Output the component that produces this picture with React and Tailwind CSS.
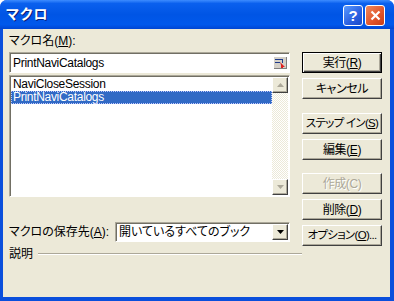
import React from 'react';

const raised =
  'border border-t-white border-l-white border-r-[#404040] border-b-[#404040] shadow-[inset_-1px_-1px_#aca899]';
const sunken =
  'border border-t-[#aca899] border-l-[#aca899] border-r-white border-b-white shadow-[inset_1px_1px_#716f64]';

function Btn({ children, isDefault, disabled, tight, className = '' }) {
  const frame = isDefault
    ? 'border border-black shadow-[inset_1px_1px_#fff,inset_-1px_-1px_#404040,inset_-2px_-2px_#aca899]'
    : raised;
  return (
    <div
      className={`h-[21px] w-[80px] bg-[#ece9d8] flex items-center justify-center leading-none whitespace-nowrap ${
        tight ? 'text-[11.5px] tracking-[-0.7px]' : 'text-[12px] tracking-[-0.4px]'
      } ${frame} ${disabled ? 'text-[#aca899] [text-shadow:1px_1px_#fff]' : 'text-black'} ${className}`}
    >
      {children}
    </div>
  );
}

function Arrow({ dir = 'down', color = '#000' }) {
  return (
    <svg width="7" height="4" viewBox="0 0 7 4">
      {dir === 'down' ? (
        <polygon points="0,0 7,0 3.5,4" fill={color} />
      ) : (
        <polygon points="0,4 7,4 3.5,0" fill={color} />
      )}
    </svg>
  );
}

function RefIcon() {
  return (
    <svg width="13" height="12" viewBox="0 0 13 12">
      <rect x="0" y="0" width="13" height="12" fill="#d4d0c8" />
      <rect x="1" y="2" width="7" height="1" fill="#1f3b8a" />
      <rect x="1" y="5" width="5" height="1" fill="#1f3b8a" />
      <rect x="8" y="2" width="1" height="4" fill="#1f3b8a" />
      <polygon points="6,5 11,10 9,10 9,12 7,12 7,8" fill="#e02020" />
      <rect x="12" y="0" width="1" height="12" fill="#808080" />
      <rect x="0" y="11" width="13" height="1" fill="#808080" />
    </svg>
  );
}

export default function App() {
  return (
    <div className="w-[394px] h-[301px] bg-[#0a4fdc] rounded-t-[7px] flex flex-col overflow-hidden font-['Liberation_Sans','Noto_Sans_CJK_JP',sans-serif] [font-feature-settings:'palt'] select-none">
      {/* title bar */}
      <div className="h-[29px] shrink-0 flex items-center pl-[6px] pr-[9px] bg-[linear-gradient(to_bottom,#3d8cff_0%,#0a60ee_12%,#0055e5_50%,#0058ec_85%,#0045d2_100%)]">
        <span className="text-white font-bold text-[14px] tracking-[1px] [text-shadow:1px_1px_#0a1e7a]">マクロ</span>
        <div className="ml-auto flex gap-[2px] mt-[1px]">
          <div className="w-[20px] h-[21px] rounded-[3px] border border-white bg-[linear-gradient(135deg,#5a9bff,#2a5fe0_60%,#1b49c8)] flex items-center justify-center text-white font-bold text-[15px] leading-none">
            ?
          </div>
          <div className="w-[20px] h-[21px] rounded-[3px] border border-white bg-[linear-gradient(135deg,#f08a5c,#e0532a_60%,#c63d16)] flex items-center justify-center">
            <svg width="11" height="11" viewBox="0 0 11 11">
              <path d="M1.5 1.5 L9.5 9.5 M9.5 1.5 L1.5 9.5" stroke="#fff" strokeWidth="2.2" />
            </svg>
          </div>
        </div>
      </div>

      {/* body */}
      <div className="flex-1 ml-[3px] mr-[4px] mb-[4px] bg-[#ece9d8] flex pl-[6px] pr-[8px] text-[12px] text-black">
        {/* left column */}
        <div className="w-[293px] flex flex-col pt-[5px]">
          <div className="leading-[14px] h-[14px]">
            マクロ名(<span className="underline">M</span>):
          </div>
          <div className={`mt-[4px] w-[281px] h-[21px] bg-white flex items-center pl-[3px] pr-[2px] ${sunken}`}>
            <span className="leading-none tracking-[-0.3px]">PrintNaviCatalogs</span>
            <span className="ml-auto flex">
              <RefIcon />
            </span>
          </div>
          <div className={`mt-[2px] w-[281px] h-[122px] bg-white flex p-[1px] ${sunken}`}>
            <div className="flex-1 flex flex-col pt-[1px] leading-[13px] tracking-[-0.3px]">
              <div className="pl-[2px] h-[13px]">NaviCloseSession</div>
              <div className="pl-[2px] h-[13px] bg-[#316ac5] text-white outline-1 outline-dotted outline-[#c0c8ff] -outline-offset-1">
                PrintNaviCatalogs
              </div>
            </div>
            <div className="w-[16px] flex flex-col bg-[repeating-conic-gradient(#ece9d8_0%_25%,#ffffff_0%_50%)] bg-size-[2px_2px]">
              <div className={`h-[16px] bg-[#ece9d8] flex items-center justify-center ${raised}`}>
                <Arrow dir="up" color="#aca899" />
              </div>
              <div className="flex-1" />
              <div className={`h-[16px] bg-[#ece9d8] flex items-center justify-center ${raised}`}>
                <Arrow dir="down" color="#aca899" />
              </div>
            </div>
          </div>
          <div className="mt-[25px] flex items-center w-[281px]">
            <span className="w-[106px] leading-none">
              マクロの保存先(<span className="underline">A</span>):
            </span>
            <div className={`flex-1 h-[20px] bg-white flex items-center pl-[3px] p-[1px] ${sunken}`}>
              <span className="leading-none">開いているすべてのブック</span>
              <div className={`ml-auto w-[16px] h-full bg-[#ece9d8] flex items-center justify-center ${raised}`}>
                <Arrow dir="down" />
              </div>
            </div>
          </div>
          <div className="mt-[5px] h-[14px] flex items-center">
            <span className="leading-none">説明</span>
            <div className="flex-1 ml-[5px] border-t border-t-[#aca899] border-b border-b-white" />
          </div>
        </div>

        {/* right column */}
        <div className="w-[80px] flex flex-col pt-[23px]">
          <Btn isDefault>
            実行(<span className="underline">R</span>)
          </Btn>
          <Btn className="mt-[5px]">キャンセル</Btn>
          <Btn className="mt-[14px]" tight>
            ステップ イン(<span className="underline">S</span>)
          </Btn>
          <Btn className="mt-[5px]">
            編集(<span className="underline">E</span>)
          </Btn>
          <Btn className="mt-[13px]" disabled>
            作成(C)
          </Btn>
          <Btn className="mt-[5px]">
            削除(<span className="underline">D</span>)
          </Btn>
          <Btn className="mt-[5px]" tight>
            オプション(<span className="underline">O</span>)...
          </Btn>
        </div>
      </div>
    </div>
  );
}
